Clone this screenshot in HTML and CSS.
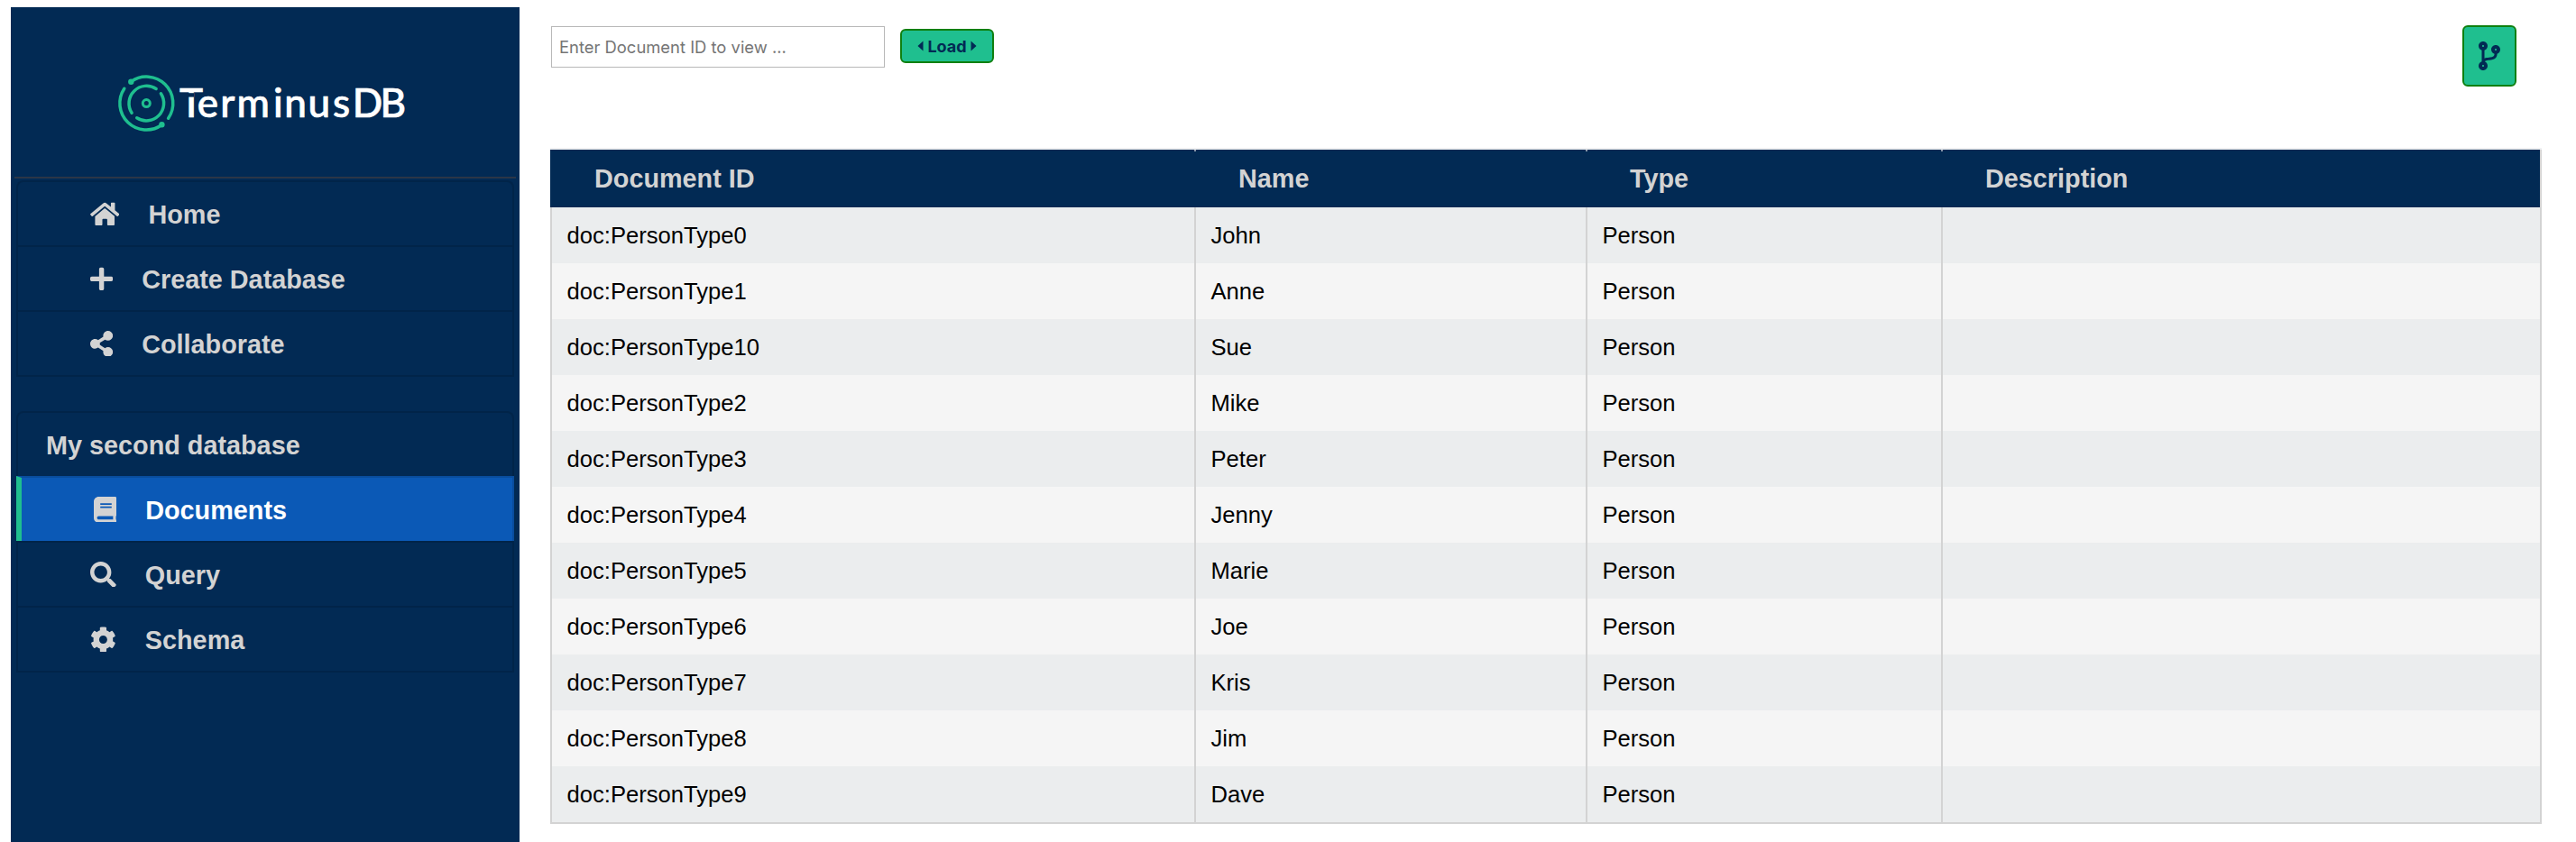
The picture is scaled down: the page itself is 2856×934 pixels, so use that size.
FILE: index.html
```html
<!DOCTYPE html>
<html lang="en">
<head>
<meta charset="utf-8">
<title>TerminusDB - Documents</title>
<link rel="stylesheet" href="styles.css">
</head>
<body>
<nav class="sidebar">
  <div class="brand">
    <svg class="brand-logo" viewBox="0 0 330 80" role="img" aria-label="TerminusDB">
      <g class="rings">
        <path d="M15.3 16.6A29.4 29.4 0 0 1 56.6 57.2"/>
        <path d="M7.8 24.3A29.4 29.4 0 0 0 49.4 64.5"/>
        <path d="M43.1 24.5A19.4 19.4 0 0 0 16.1 51.2"/>
        <path d="M48.4 29.8A19.4 19.4 0 0 1 21.7 56.8"/>
        <circle cx="32.3" cy="40.6" r="4"/>
      </g>
      <circle class="node" cx="15.3" cy="16.8" r="3.2"/>
      <circle class="node" cx="49.4" cy="64.3" r="3.2"/>
      <text class="wordmark" y="56" x="69 88.7 114.3 132.6 173 185.2 211.6 239 260.8 291.6">TerminusDB</text>
      <path class="cut" d="M76 29.2h9v4.4h-9z"/>
    </svg>
  </div>
  <ul class="menu">
    <li class="item"><svg class="icon" viewBox="0 0 576 512"><path d="M280.37 148.26L96 300.11V464a16 16 0 0 0 16 16l112.06-.29a16 16 0 0 0 15.92-16V368a16 16 0 0 1 16-16h64a16 16 0 0 1 16 16v95.64a16 16 0 0 0 16 16.05L464 480a16 16 0 0 0 16-16V300L295.67 148.26a12.19 12.19 0 0 0-15.3 0zM571.6 251.47L488 182.56V44.05a12 12 0 0 0-12-12h-56a12 12 0 0 0-12 12v72.61L318.47 43a48 48 0 0 0-61 0L4.34 251.47a12 12 0 0 0-1.6 16.9l25.5 31A12 12 0 0 0 45.15 301l235.22-193.74a12.19 12.19 0 0 1 15.3 0L530.9 301a12 12 0 0 0 16.9-1.6l25.5-31a12 12 0 0 0-1.7-16.93z"/></svg><span>Home</span></li>
    <li class="item"><svg class="icon" viewBox="0 0 448 512"><path d="M416 208H272V64c0-17.67-14.33-32-32-32h-32c-17.67 0-32 14.33-32 32v144H32c-17.67 0-32 14.33-32 32v32c0 17.67 14.33 32 32 32h144v144c0 17.67 14.33 32 32 32h32c17.67 0 32-14.33 32-32V304h144c17.67 0 32-14.33 32-32v-32c0-17.67-14.33-32-32-32z"/></svg><span>Create Database</span></li>
    <li class="item"><svg class="icon" viewBox="0 0 448 512"><path d="M352 320c-22.608 0-43.387 7.819-59.79 20.895l-102.486-64.054a96.551 96.551 0 0 0 0-41.683l102.486-64.054C308.613 184.181 329.392 192 352 192c53.019 0 96-42.981 96-96S405.019 0 352 0s-96 42.981-96 96c0 7.158.79 14.13 2.276 20.841L155.79 180.895C139.387 167.819 118.608 160 96 160c-53.019 0-96 42.981-96 96s42.981 96 96 96c22.608 0 43.387-7.819 59.79-20.895l102.486 64.054A96.301 96.301 0 0 0 256 416c0 53.019 42.981 96 96 96s96-42.981 96-96-42.981-96-96-96z"/></svg><span>Collaborate</span></li>
  </ul>
  <ul class="menu">
    <li class="item heading"><span>My second database</span></li>
    <li class="item active"><svg class="icon" viewBox="0 0 448 512"><path d="M448 360V24c0-13.3-10.7-24-24-24H96C43 0 0 43 0 96v320c0 53 43 96 96 96h328c13.3 0 24-10.7 24-24v-16c0-7.5-3.5-14.3-8.9-18.7-4.2-15.4-4.2-59.3 0-74.7 5.4-4.3 8.9-11.1 8.9-18.6zM128 134c0-3.3 2.7-6 6-6h212c3.3 0 6 2.7 6 6v20c0 3.3-2.7 6-6 6H134c-3.3 0-6-2.7-6-6v-20zm0 64c0-3.3 2.7-6 6-6h212c3.3 0 6 2.7 6 6v20c0 3.3-2.7 6-6 6H134c-3.3 0-6-2.7-6-6v-20zm253.4 250H96c-17.7 0-32-14.3-32-32 0-17.6 14.4-32 32-32h285.4c-1.9 17.1-1.9 46.9 0 64z"/></svg><span>Documents</span></li>
    <li class="item"><svg class="icon" viewBox="0 0 512 512"><path d="M505 442.7L405.3 343c-4.5-4.5-10.6-7-17-7H372c27.6-35.3 44-79.7 44-128C416 93.1 322.9 0 208 0S0 93.1 0 208s93.1 208 208 208c48.3 0 92.7-16.4 128-44v16.3c0 6.4 2.5 12.5 7 17l99.7 99.7c9.4 9.4 24.6 9.4 33.9 0l28.3-28.3c9.4-9.4 9.4-24.6.1-34zM208 336c-70.7 0-128-57.2-128-128 0-70.7 57.2-128 128-128 70.7 0 128 57.2 128 128 0 70.7-57.2 128-128 128z"/></svg><span>Query</span></li>
    <li class="item"><svg class="icon" viewBox="0 0 512 512"><path d="M487.4 315.7l-42.6-24.6c4.3-23.2 4.3-47 0-70.2l42.6-24.6c4.9-2.8 7.1-8.6 5.5-14-11.1-35.6-30-67.8-54.7-94.6-3.8-4.1-10-5.1-14.8-2.3L380.8 110c-17.9-15.4-38.5-27.3-60.8-35.1V25.8c0-5.6-3.9-10.5-9.4-11.7-36.7-8.2-74.3-7.8-109.2 0-5.5 1.2-9.4 6.1-9.4 11.7V75c-22.2 7.9-42.8 19.8-60.8 35.1L88.7 85.5c-4.9-2.8-11-1.9-14.8 2.3-24.7 26.7-43.6 58.9-54.7 94.6-1.7 5.4.6 11.2 5.5 14L67.3 221c-4.3 23.2-4.3 47 0 70.2l-42.6 24.6c-4.9 2.8-7.1 8.6-5.5 14 11.1 35.6 30 67.8 54.7 94.6 3.8 4.1 10 5.1 14.8 2.3l42.6-24.6c17.9 15.4 38.5 27.3 60.8 35.1v49.2c0 5.6 3.9 10.5 9.4 11.7 36.7 8.2 74.3 7.8 109.2 0 5.5-1.2 9.4-6.1 9.4-11.7v-49.2c22.2-7.9 42.8-19.8 60.8-35.1l42.6 24.6c4.9 2.8 11 1.9 14.8-2.3 24.7-26.7 43.6-58.9 54.7-94.6 1.5-5.5-.7-11.3-5.6-14.1zM256 336c-44.1 0-80-35.9-80-80s35.9-80 80-80 80 35.9 80 80-35.9 80-80 80z"/></svg><span>Schema</span></li>
  </ul>
</nav>
<main class="content">
  <div class="toolbar">
    <input class="doc-input" type="text" placeholder="Enter Document ID to view ...">
    <button class="btn load"><svg class="caret" viewBox="0 0 7 12"><path d="M6.5 .5v11L.5 6z"/></svg><span>Load</span><svg class="caret" viewBox="0 0 7 12"><path d="M.5 .5v11l6-5.5z"/></svg></button>
    <button class="btn branch" aria-label="Branches"><svg viewBox="0 0 384 512"><path d="M384 144c0-44.2-35.8-80-80-80s-80 35.8-80 80c0 36.4 24.3 67.1 57.5 76.8-.6 16.1-4.2 28.5-11 36.9-15.4 19.2-49.3 22.4-85.2 25.7-28.2 2.6-57.4 5.4-81.3 16.9v-144c32.5-10.2 56-40.5 56-76.3 0-44.2-35.8-80-80-80S0 35.8 0 80c0 35.8 23.5 66.1 56 76.3v199.3C23.5 365.9 0 396.2 0 432c0 44.2 35.8 80 80 80s80-35.8 80-80c0-34-21.2-63.1-51.2-74.6 3.1-5.2 7.8-9.8 14.9-13.4 16.2-8.2 40.4-10.4 66.1-12.8 42.2-3.9 90-8.4 118.2-43.4 14-17.4 21.1-39.8 21.6-67.9 31.6-10.8 54.4-40.7 54.4-75.9zM80 64c8.8 0 16 7.2 16 16s-7.2 16-16 16-16-7.2-16-16 7.2-16 16-16zm0 384c-8.8 0-16-7.2-16-16s7.2-16 16-16 16 7.2 16 16-7.2 16-16 16zm224-320c8.8 0 16 7.2 16 16s-7.2 16-16 16-16-7.2-16-16 7.2-16 16-16z"/></svg></button>
  </div>
  <table class="docs">
    <colgroup><col class="c-id"><col class="c-name"><col class="c-type"><col class="c-desc"></colgroup>
    <thead><tr><th>Document ID</th><th>Name</th><th>Type</th><th>Description</th></tr></thead>
    <tbody>
      <tr><td>doc:PersonType0</td><td>John</td><td>Person</td><td></td></tr>
      <tr><td>doc:PersonType1</td><td>Anne</td><td>Person</td><td></td></tr>
      <tr><td>doc:PersonType10</td><td>Sue</td><td>Person</td><td></td></tr>
      <tr><td>doc:PersonType2</td><td>Mike</td><td>Person</td><td></td></tr>
      <tr><td>doc:PersonType3</td><td>Peter</td><td>Person</td><td></td></tr>
      <tr><td>doc:PersonType4</td><td>Jenny</td><td>Person</td><td></td></tr>
      <tr><td>doc:PersonType5</td><td>Marie</td><td>Person</td><td></td></tr>
      <tr><td>doc:PersonType6</td><td>Joe</td><td>Person</td><td></td></tr>
      <tr><td>doc:PersonType7</td><td>Kris</td><td>Person</td><td></td></tr>
      <tr><td>doc:PersonType8</td><td>Jim</td><td>Person</td><td></td></tr>
      <tr><td>doc:PersonType9</td><td>Dave</td><td>Person</td><td></td></tr>
    </tbody>
  </table>
</main>
</body>
</html>
```
FILE: styles.css
```css
* { box-sizing: border-box; }

body {
  margin: 0;
  height: 934px;
  padding: 8px 38px 0 12px;
  display: flex;
  gap: 34px;
  overflow: hidden;
  background: #fff;
  font-family: "Liberation Sans", Arial, Helvetica, sans-serif;
}

.sidebar {
  width: 564px;
  height: 926px;
  flex: none;
  padding: 0 4px;
  background: #022a54;
  color: #d3d3d3;
}

.brand {
  height: 190px;
  padding: 66px 0 0 114px;
  border-bottom: 2px solid #2b3647;
}

.brand-logo { display: block; width: 330px; height: 80px; }
.rings { fill: none; stroke: #1fbf8f; stroke-width: 3.5; stroke-linecap: round; }
.rings circle { stroke-width: 3; }
.node { fill: #1fbf8f; }
.wordmark { fill: #fff; stroke: #fff; stroke-width: 0.7; font: 500 44px Lato, sans-serif; }
.cut { fill: #022a54; }

.menu { list-style: none; margin: 2px 2px 38px; padding: 0; }

.item {
  height: 74px;
  margin-bottom: -2px;
  padding-left: 80px;
  display: flex;
  align-items: center;
  gap: 32px;
  border: 2px solid rgba(0, 0, 0, 0.125);
  background: #022a54;
  font-size: 28.8px;
  font-weight: bold;
  line-height: 34px;
}

.item span { padding-top: 2px; }
.item:first-child { border-radius: 8px 8px 0 0; }
.item:last-child { margin-bottom: 0; }
.heading { padding-left: 31px; }
.active { background: #0b59b6; border-left: 6px solid #1fbf8f; color: #fff; }

.icon { height: 28.8px; fill: #d3d3d3; }

.content { flex: 1; min-width: 0; padding-top: 20px; }

.toolbar {
  height: 136px;
  padding: 0 28px 0 1px;
  display: flex;
  align-items: flex-start;
}

.doc-input {
  width: 370px;
  height: 46px;
  margin: 1px 17px 0 0;
  padding: 0 8px;
  border: 1px solid #b8b8b8;
  border-radius: 0;
  font: 18.4px Inter, sans-serif;
}

.doc-input::placeholder { color: #757575; opacity: 1; }

.btn {
  display: flex;
  align-items: center;
  justify-content: center;
  padding: 0;
  border: 2px solid #0f800f;
  border-radius: 6px;
  background: #1fbf8f;
  color: #022a54;
  fill: #022a54;
}

.load { width: 104px; height: 38px; margin-top: 4px; gap: 4px; font: 700 18px Inter, sans-serif; }
.caret { width: 7px; height: 12px; }
.branch { width: 60px; height: 68px; margin-left: auto; }
.branch svg { width: 24px; height: 32px; }

.docs {
  width: 2208px;
  table-layout: fixed;
  border-collapse: separate;
  border-spacing: 0;
  border-top: 2px solid #f0f0f2;
}

.c-id { width: 714px; }
.c-name { width: 434px; }
.c-type { width: 394px; }
.c-desc { width: 666px; }

.docs th {
  height: 64px;
  padding: 0 0 0 49px;
  background: #022a54;
  color: #d3d3d3;
  font-size: 28.8px;
  text-align: left;
}

.docs th + th { background: linear-gradient(#8d9bad, #8d9bad) 0 0 / 2px 2px no-repeat #022a54; }
.docs th:last-child { border-right: 2px solid #d3d3d3; }

.docs td {
  height: 62px;
  padding: 0 16.5px;
  border-left: 2px solid #d3d3d3;
  font-size: 25.6px;
}

.docs td:last-child { border-right: 2px solid #d3d3d3; }
.docs tbody tr:nth-child(odd) { background: #ebedee; }
.docs tbody tr:nth-child(even) { background: #f5f5f5; }
.docs tbody tr:last-child td { height: 64px; border-bottom: 2px solid #d3d3d3; }
```
